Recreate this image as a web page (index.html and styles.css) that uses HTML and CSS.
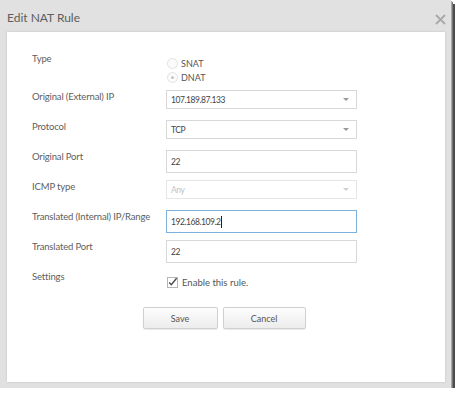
FILE: index.html
```html
<!DOCTYPE html>
<html lang="en">
<head>
  <meta charset="UTF-8" />
  <title>Edit NAT Rule</title>
  <link rel="stylesheet" href="styles.css">
</head>
<body>

  <!-- Dialog -->
  <div class="dialog">
    <div class="dialog-head">
      <span class="dialog-title">Edit NAT Rule</span>
      <svg class="close" width="11" height="11" viewBox="0 0 11 11">
        <path d="M1 1 L10 10 M10 1 L1 10" stroke="#a9a9a9" stroke-width="1.8" fill="none"/>
      </svg>
    </div>

    <div class="panel">
      <div class="form">
        <div class="row row-type">
          <div class="label">Type</div>
          <div class="radios">
            <div class="radio"><span class="dot"></span>SNAT</div>
            <div class="radio checked"><span class="dot"></span>DNAT</div>
          </div>
        </div>

        <div class="row">
          <div class="label">Original (External) IP</div>
          <div class="field select">107.189.87.133<span class="arrow"></span></div>
        </div>

        <div class="row">
          <div class="label">Protocol</div>
          <div class="field select">TCP<span class="arrow"></span></div>
        </div>

        <div class="row">
          <div class="label">Original Port</div>
          <div class="field text">22</div>
        </div>

        <div class="row">
          <div class="label">ICMP type</div>
          <div class="field select disabled">Any<span class="arrow"></span></div>
        </div>

        <div class="row">
          <div class="label">Translated (Internal) IP/Range</div>
          <div class="field text focus">192.168.109.2<span class="caret"></span></div>
        </div>

        <div class="row">
          <div class="label">Translated Port</div>
          <div class="field text">22</div>
        </div>

        <div class="row row-settings">
          <div class="label">Settings</div>
          <div class="check">
            <svg class="box" width="11" height="11" viewBox="0 0 11 11">
              <rect x="0.5" y="0.5" width="10" height="10" fill="#fff" stroke="#b5b5b5"/>
              <path d="M2.2 5.6 L4.3 7.8 L9.6 1.2" stroke="#4a4a4a" stroke-width="1.4" fill="none"/>
            </svg>
            Enable this rule.
          </div>
        </div>

        <div class="actions">
          <button type="button" class="btn btn-save">Save</button>
          <button type="button" class="btn btn-cancel">Cancel</button>
        </div>
      </div>
    </div>
  </div>

</body>
</html>
```

FILE: styles.css
```css
body {
  margin: 0;
  background: #fff;
  font-family: Lato, "Liberation Sans", sans-serif;
  color: #555;
}

.dialog {
  width: 451px;
  height: 388px;
  background: #e1e1e1;
  box-shadow: 1px 1px 0 #a8a8a8, 2px 2px 0 #777, 4px 4px 0 #4c4c4c;
}

.dialog-head {
  height: 32px;
  display: flex;
  justify-content: space-between;
  align-items: flex-start;
  padding: 0 5px 0 7px;
}

.dialog-title {
  font-size: 12px;
  line-height: 14px;
  padding-top: 11px;
  color: #5e5e5e;
}

.close {
  margin-top: 14px;
}

.panel {
  margin: 0 6px 0 7px;
  height: 350px;
  background: #fff;
  box-shadow: 0 0 2px rgba(0, 0, 0, 0.15);
}

.form {
  padding: 20px 0 0 25px;
}

.row {
  display: grid;
  grid-template-columns: 134px 191px;
  height: 30px;
  align-items: start;
}

.row-type {
  height: 38px;
}

.row-settings {
  height: 37px;
}

.label {
  font-size: 9.5px;
  line-height: 13px;
  color: #5e5e5e;
  letter-spacing: -0.15px;
}

.radios {
  padding-top: 4px;
}

.radio {
  display: flex;
  align-items: center;
  height: 14px;
  font-size: 9px;
  color: #555;
  padding-left: 1px;
}

.dot {
  width: 9px;
  height: 9px;
  border: 1px solid #e2e2e2;
  border-radius: 50%;
  background: #fbfbfb;
  margin-right: 3px;
  position: relative;
}

.radio.checked .dot::after {
  content: "";
  position: absolute;
  left: 3px;
  top: 3px;
  width: 3px;
  height: 3px;
  border-radius: 50%;
  background: #c4c4c4;
}

.field {
  box-sizing: border-box;
  border: 1px solid #d8d8d8;
  padding-left: 4px;
  font-size: 8.5px;
  color: #444;
  display: flex;
  align-items: center;
  position: relative;
  letter-spacing: -0.45px;
}

.select {
  height: 19px;
}

.text {
  height: 23px;
}

.focus {
  border-color: #7fb1df;
}

.disabled {
  color: #c2c2c2;
  border-color: #e6e6e6;
}

.arrow {
  position: absolute;
  right: 7px;
  top: 7px;
  border-left: 3px solid transparent;
  border-right: 3px solid transparent;
  border-top: 3px solid #999;
}

.disabled .arrow {
  border-top-color: #d0d0d0;
}

.caret {
  width: 1px;
  height: 12px;
  background: #222;
  margin-left: 1px;
}

.check {
  display: flex;
  align-items: center;
  padding-top: 7px;
  font-size: 9.5px;
  color: #555;
}

.box {
  margin: 0 4px 0 1px;
}

.actions {
  display: flex;
  justify-content: center;
  gap: 5px;
  padding-right: 29px;
}

.btn {
  height: 22px;
  border: 1px solid #d0d0d0;
  border-radius: 2px;
  background: linear-gradient(#fdfdfd, #ececec);
  font-family: Lato, "Liberation Sans", sans-serif;
  font-size: 9px;
  color: #555;
  box-shadow: 0 1px 1px rgba(0, 0, 0, 0.08);
}

.btn-save {
  width: 75px;
}

.btn-cancel {
  width: 83px;
}
```
